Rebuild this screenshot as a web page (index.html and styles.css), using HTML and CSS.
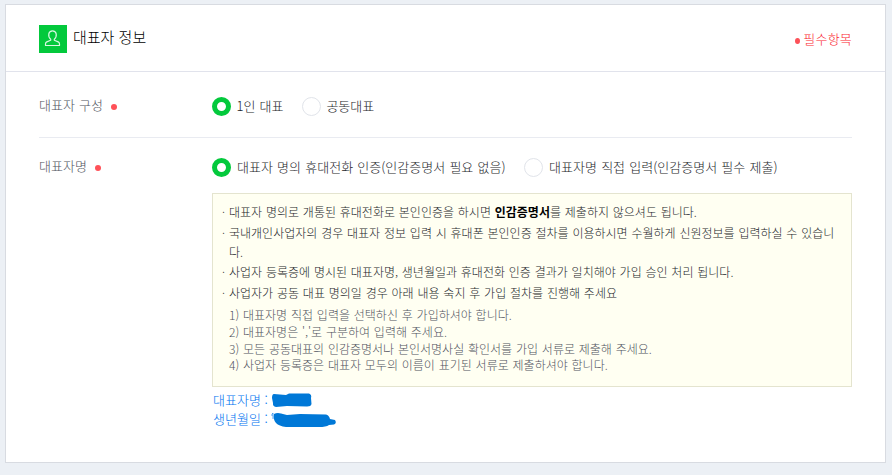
FILE: index.html
```
<!DOCTYPE html>
<html lang="ko">
<head>
<meta charset="utf-8">
<title>대표자 정보</title>
<link rel="stylesheet" href="styles.css">
</head>
<body>
<section class="card">
  <header class="head">
    <span class="badge">
      <svg width="28" height="28" viewBox="0 0 28 28" fill="none" stroke="#d9f7e2" stroke-width="1.2" stroke-linejoin="round"><path d="M11.7 14.2C9.9 12.8 9.5 10.800 9.800 8.900C10.200 6.800 11.700 5.800 13.500 5.800S16.800 6.800 17.200 8.900C17.500 10.800 17.100 12.800 15.300 14.200V15.300L19.200 16.900Q20.500 17.500 20.500 19V20.500H6.500V19Q6.500 17.500 7.800 16.900L11.700 15.300Z"/></svg>
    </span>
    <h1 class="title">대표자 정보</h1>
    <span class="required"><i class="req-dot"></i>필수항목</span>
  </header>
  <div class="rows">
    <div class="row first">
      <div class="label"><span>대표자 구성</span><i class="dot"></i></div>
      <div class="options">
        <span class="option"><i class="radio on"></i>1인 대표</span>
        <span class="option"><i class="radio"></i>공동대표</span>
      </div>
    </div>
    <div class="row second">
      <div class="label"><span>대표자명</span><i class="dot"></i></div>
      <div class="field">
        <div class="options wide">
          <span class="option"><i class="radio on"></i>대표자 명의 휴대전화 인증(인감증명서 필요 없음)</span>
          <span class="option"><i class="radio"></i>대표자명 직접 입력(인감증명서 필수 제출)</span>
        </div>
        <div class="notice">
          <ul class="list">
            <li>대표자 명의로 개통된 휴대전화로 본인인증을 하시면 <b>인감증명서</b>를 제출하지 않으셔도 됩니다.</li>
            <li>국내개인사업자의 경우 대표자 정보 입력 시 휴대폰 본인인증 절차를 이용하시면 수월하게 신원정보를 입력하실 수 있습니<br>다.</li>
            <li>사업자 등록증에 명시된 대표자명, 생년월일과 휴대전화 인증 결과가 일치해야 가입 승인 처리 됩니다.</li>
            <li>사업자가 공동 대표 명의일 경우 아래 내용 숙지 후 가입 절차를 진행해 주세요</li>
          </ul>
          <div class="steps">
            <p>1) 대표자명 직접 입력을 선택하신 후 가입하셔야 합니다.</p>
            <p>2) 대표자명은 ','로 구분하여 입력해 주세요.</p>
            <p>3) 모든 공동대표의 인감증명서나 본인서명사실 확인서를 가입 서류로 제출해 주세요.</p>
            <p>4) 사업자 등록증은 대표자 모두의 이름이 표기된 서류로 제출하셔야 합니다.</p>
          </div>
        </div>
        <div class="result">
          <p>대표자명 : <svg class="mask" width="42" height="18" viewBox="0 0 42 18"><path d="M3 2L15 3L18 1.5L38 1.5Q41 2.5 40 6L40.500 12Q40 14.500 36 14.500L16 14L5 15Q1.500 14.500 2 11L1 6Q1 2 3 2Z" fill="#0078d7"/></svg></p>
          <p>생년월일 : <svg class="mask" width="68" height="18" viewBox="0 0 68 18"><path d="M1 5V3L2 2V8" fill="none" stroke="#2e8fef" stroke-width=".8"/><path d="M3 3Q6 1.500 10 2.500L16 4L29 3L55 3.500Q58 4 59 8L64 9Q66 12 63 13.500L58 14Q55 16 48 16H15Q8 15 5 12Q2 9 3 3Z" fill="#0078d7"/></svg></p>
        </div>
      </div>
    </div>
  </div>
</section>
</body>
</html>
```
FILE: styles.css
```
* { box-sizing: border-box; }
body {
  margin: 0;
  padding: 4px 6px 12px 5px;
  background: #ecf0f5;
  font-family: "Noto Sans CJK KR", sans-serif;
  font-weight: 300;
  color: #1c1e2a;
}
p, ul, h1 { margin: 0; padding: 0; }
.card {
  height: 459px;
  background: #fff;
  border: 1px solid #d8dbe1;
}
.head {
  display: flex;
  align-items: center;
  height: 67px;
  padding: 1px 33px 0;
  border-bottom: 1px solid #e1e3ec;
}
.badge { width: 28px; height: 28px; background: #03c93c; }
.badge svg { display: block; }
.title {
  margin-left: 6px;
  padding-bottom: 4px;
  font-size: 15px;
  line-height: 20px;
  font-weight: 300;
  color: #000;
}
.required {
  display: flex;
  align-items: center;
  margin-left: auto;
  padding-top: 1px;
  font-size: 13px;
  line-height: 20px;
  letter-spacing: .2px;
  color: #fa2832;
}
.req-dot {
  width: 5px;
  height: 6px;
  margin: 4px 3px 0 0;
  border-radius: 50%;
  background: #fc5158;
}
.rows { padding: 0 33px; }
.row { display: flex; }
.first { height: 66px; padding-top: 24px; border-bottom: 1px solid #e9ebf1; }
.second { padding-top: 19px; }
.label {
  display: flex;
  width: 173px;
  height: 20px;
  align-items: center;
  font-size: 13px;
  line-height: 20px;
  color: #50535e;
  word-spacing: .4px;
}
.label span { padding-bottom: 2px; }
.dot {
  width: 6px;
  height: 6px;
  margin: 2px 0 0 8px;
  border-radius: 50%;
  background: #ff5158;
}
.field { width: 640px; }
.options { display: flex; gap: 18.5px; height: 20px; }
.option {
  display: flex;
  align-items: center;
  gap: 5.5px;
  font-size: 13px;
  line-height: 20px;
  white-space: nowrap;
  word-spacing: .4px;
}
.wide .option { gap: 6px; word-spacing: .6px; }
.radio {
  width: 19px;
  height: 19px;
  border: 1px solid #e1e4ea;
  border-radius: 50%;
}
.radio.on { border: 5px solid #03c93c; }
.notice {
  height: 194px;
  margin-top: 16px;
  padding: 8px 9px 0;
  border: 1px solid #e4e4cf;
  background: #fffff2;
  font-size: 12px;
  word-spacing: .45px;
}
.list { list-style: none; line-height: 19px; }
.list li {
  display: flow-root;
  padding-left: 7px;
  margin-bottom: 1.6px;
  text-indent: -7px;
  white-space: nowrap;
}
.list li::before { content: "·"; display: inline-block; width: 7px; text-indent: 0; }
.list b { font-weight: 700; color: #000; }
.steps {
  padding: 4px 0 0 7px;
  line-height: 16.7px;
  color: #50535e;
}
.result { padding: 3px 0 0 1px; font-size: 13px; line-height: 19px; color: #0074f0; }
.result p { height: 19px; }
.mask { display: inline-block; margin-top: 2px; vertical-align: top; }
```
